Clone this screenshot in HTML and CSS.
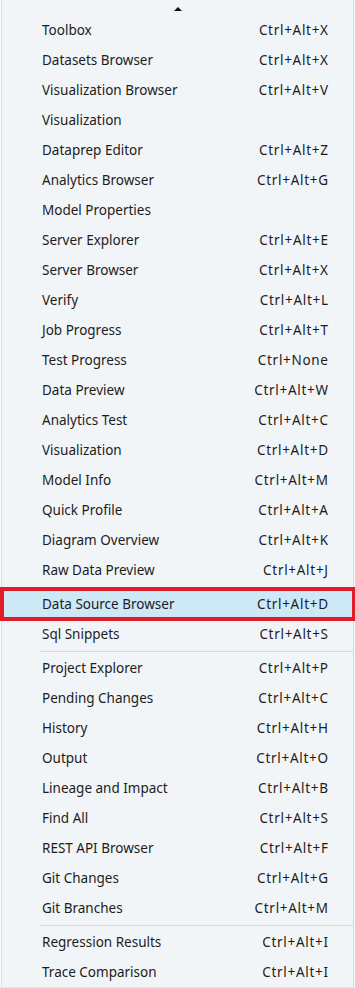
FILE: index.html
```html
<!DOCTYPE html>
<html>
<head>
<meta charset="utf-8">
<link rel="stylesheet" href="styles.css">
</head>
<body>
<div class="menu">
  <div class="scroll-up"><span class="tri-up"></span></div>
  <div class="item"><span>Toolbox</span><span class="key">Ctrl+Alt+X</span></div>
  <div class="item"><span>Datasets Browser</span><span class="key">Ctrl+Alt+X</span></div>
  <div class="item"><span>Visualization Browser</span><span class="key">Ctrl+Alt+V</span></div>
  <div class="item"><span>Visualization</span><span class="key"></span></div>
  <div class="item"><span>Dataprep Editor</span><span class="key">Ctrl+Alt+Z</span></div>
  <div class="item"><span>Analytics Browser</span><span class="key">Ctrl+Alt+G</span></div>
  <div class="item"><span>Model Properties</span><span class="key"></span></div>
  <div class="item"><span>Server Explorer</span><span class="key">Ctrl+Alt+E</span></div>
  <div class="item"><span>Server Browser</span><span class="key">Ctrl+Alt+X</span></div>
  <div class="item"><span>Verify</span><span class="key">Ctrl+Alt+L</span></div>
  <div class="item"><span>Job Progress</span><span class="key">Ctrl+Alt+T</span></div>
  <div class="item"><span>Test Progress</span><span class="key">Ctrl+None</span></div>
  <div class="item"><span>Data Preview</span><span class="key">Ctrl+Alt+W</span></div>
  <div class="item"><span>Analytics Test</span><span class="key">Ctrl+Alt+C</span></div>
  <div class="item"><span>Visualization</span><span class="key">Ctrl+Alt+D</span></div>
  <div class="item"><span>Model Info</span><span class="key">Ctrl+Alt+M</span></div>
  <div class="item"><span>Quick Profile</span><span class="key">Ctrl+Alt+A</span></div>
  <div class="item"><span>Diagram Overview</span><span class="key">Ctrl+Alt+K</span></div>
  <div class="item"><span>Raw Data Preview</span><span class="key">Ctrl+Alt+J</span></div>
  <div class="gap"></div>
  <div class="item selected"><span>Data Source Browser</span><span class="key">Ctrl+Alt+D</span><span class="callout"></span></div>
  <div class="item"><span>Sql Snippets</span><span class="key">Ctrl+Alt+S</span></div>
  <div class="sep"></div>
  <div class="item"><span>Project Explorer</span><span class="key">Ctrl+Alt+P</span></div>
  <div class="item"><span>Pending Changes</span><span class="key">Ctrl+Alt+C</span></div>
  <div class="item"><span>History</span><span class="key">Ctrl+Alt+H</span></div>
  <div class="item"><span>Output</span><span class="key">Ctrl+Alt+O</span></div>
  <div class="item"><span>Lineage and Impact</span><span class="key">Ctrl+Alt+B</span></div>
  <div class="item"><span>Find All</span><span class="key">Ctrl+Alt+S</span></div>
  <div class="item"><span>REST API Browser</span><span class="key">Ctrl+Alt+F</span></div>
  <div class="item"><span>Git Changes</span><span class="key">Ctrl+Alt+G</span></div>
  <div class="item"><span>Git Branches</span><span class="key">Ctrl+Alt+M</span></div>
  <div class="sep"></div>
  <div class="item"><span>Regression Results</span><span class="key">Ctrl+Alt+I</span></div>
  <div class="item"><span>Trace Comparison</span><span class="key">Ctrl+Alt+I</span></div>
  <div class="scroll-down"><span class="tri-down"></span></div>
</div>
</body>
</html>
```
FILE: styles.css
```css
html, body {
  margin: 0;
  padding: 0;
  background: #f7f9fb;
}
body {
  width: 355px;
  height: 988px;
  overflow: hidden;
  font-family: "Noto Sans", "Open Sans", sans-serif;
  font-size: 13.5px;
  color: #1c1c1c;
}
.menu {
  width: 351px;
  margin-left: 1px;
  background: #f2f5f8;
  border-left: 1px solid #dde1e6;
  border-right: 1px solid #d3d8de;
  display: flex;
  flex-direction: column;
}
.scroll-up {
  height: 15px;
  display: flex;
  justify-content: center;
  align-items: flex-start;
}
.tri-up {
  margin-top: 7px;
  width: 0;
  height: 0;
  border-left: 4px solid transparent;
  border-right: 4px solid transparent;
  border-bottom: 4px solid #111;
}
.item {
  position: relative;
  height: 30px;
  display: flex;
  align-items: center;
  justify-content: space-between;
  padding-left: 40px;
  padding-right: 25px;
  white-space: nowrap;
}
.key {
  letter-spacing: 0.7px;
  margin-right: -0.7px;
}
.item.selected {
  background: #cde8f6;
}
.callout {
  position: absolute;
  left: -2px;
  right: -3px;
  top: -2px;
  bottom: -2px;
  border: 4px solid #e11d2a;
  pointer-events: none;
}
.gap {
  height: 4px;
}
.sep {
  height: 4px;
  display: flex;
  align-items: center;
  padding-left: 38px;
}
.sep::before {
  content: "";
  flex: 1;
  height: 1px;
  background: #d8dce2;
}
.scroll-down {
  height: 1px;
  display: flex;
  justify-content: center;
  border-top: 1px solid #e3e6ea;
}
.tri-down {
  width: 10px;
  height: 2px;
  background: #8a8d92;
}
```
